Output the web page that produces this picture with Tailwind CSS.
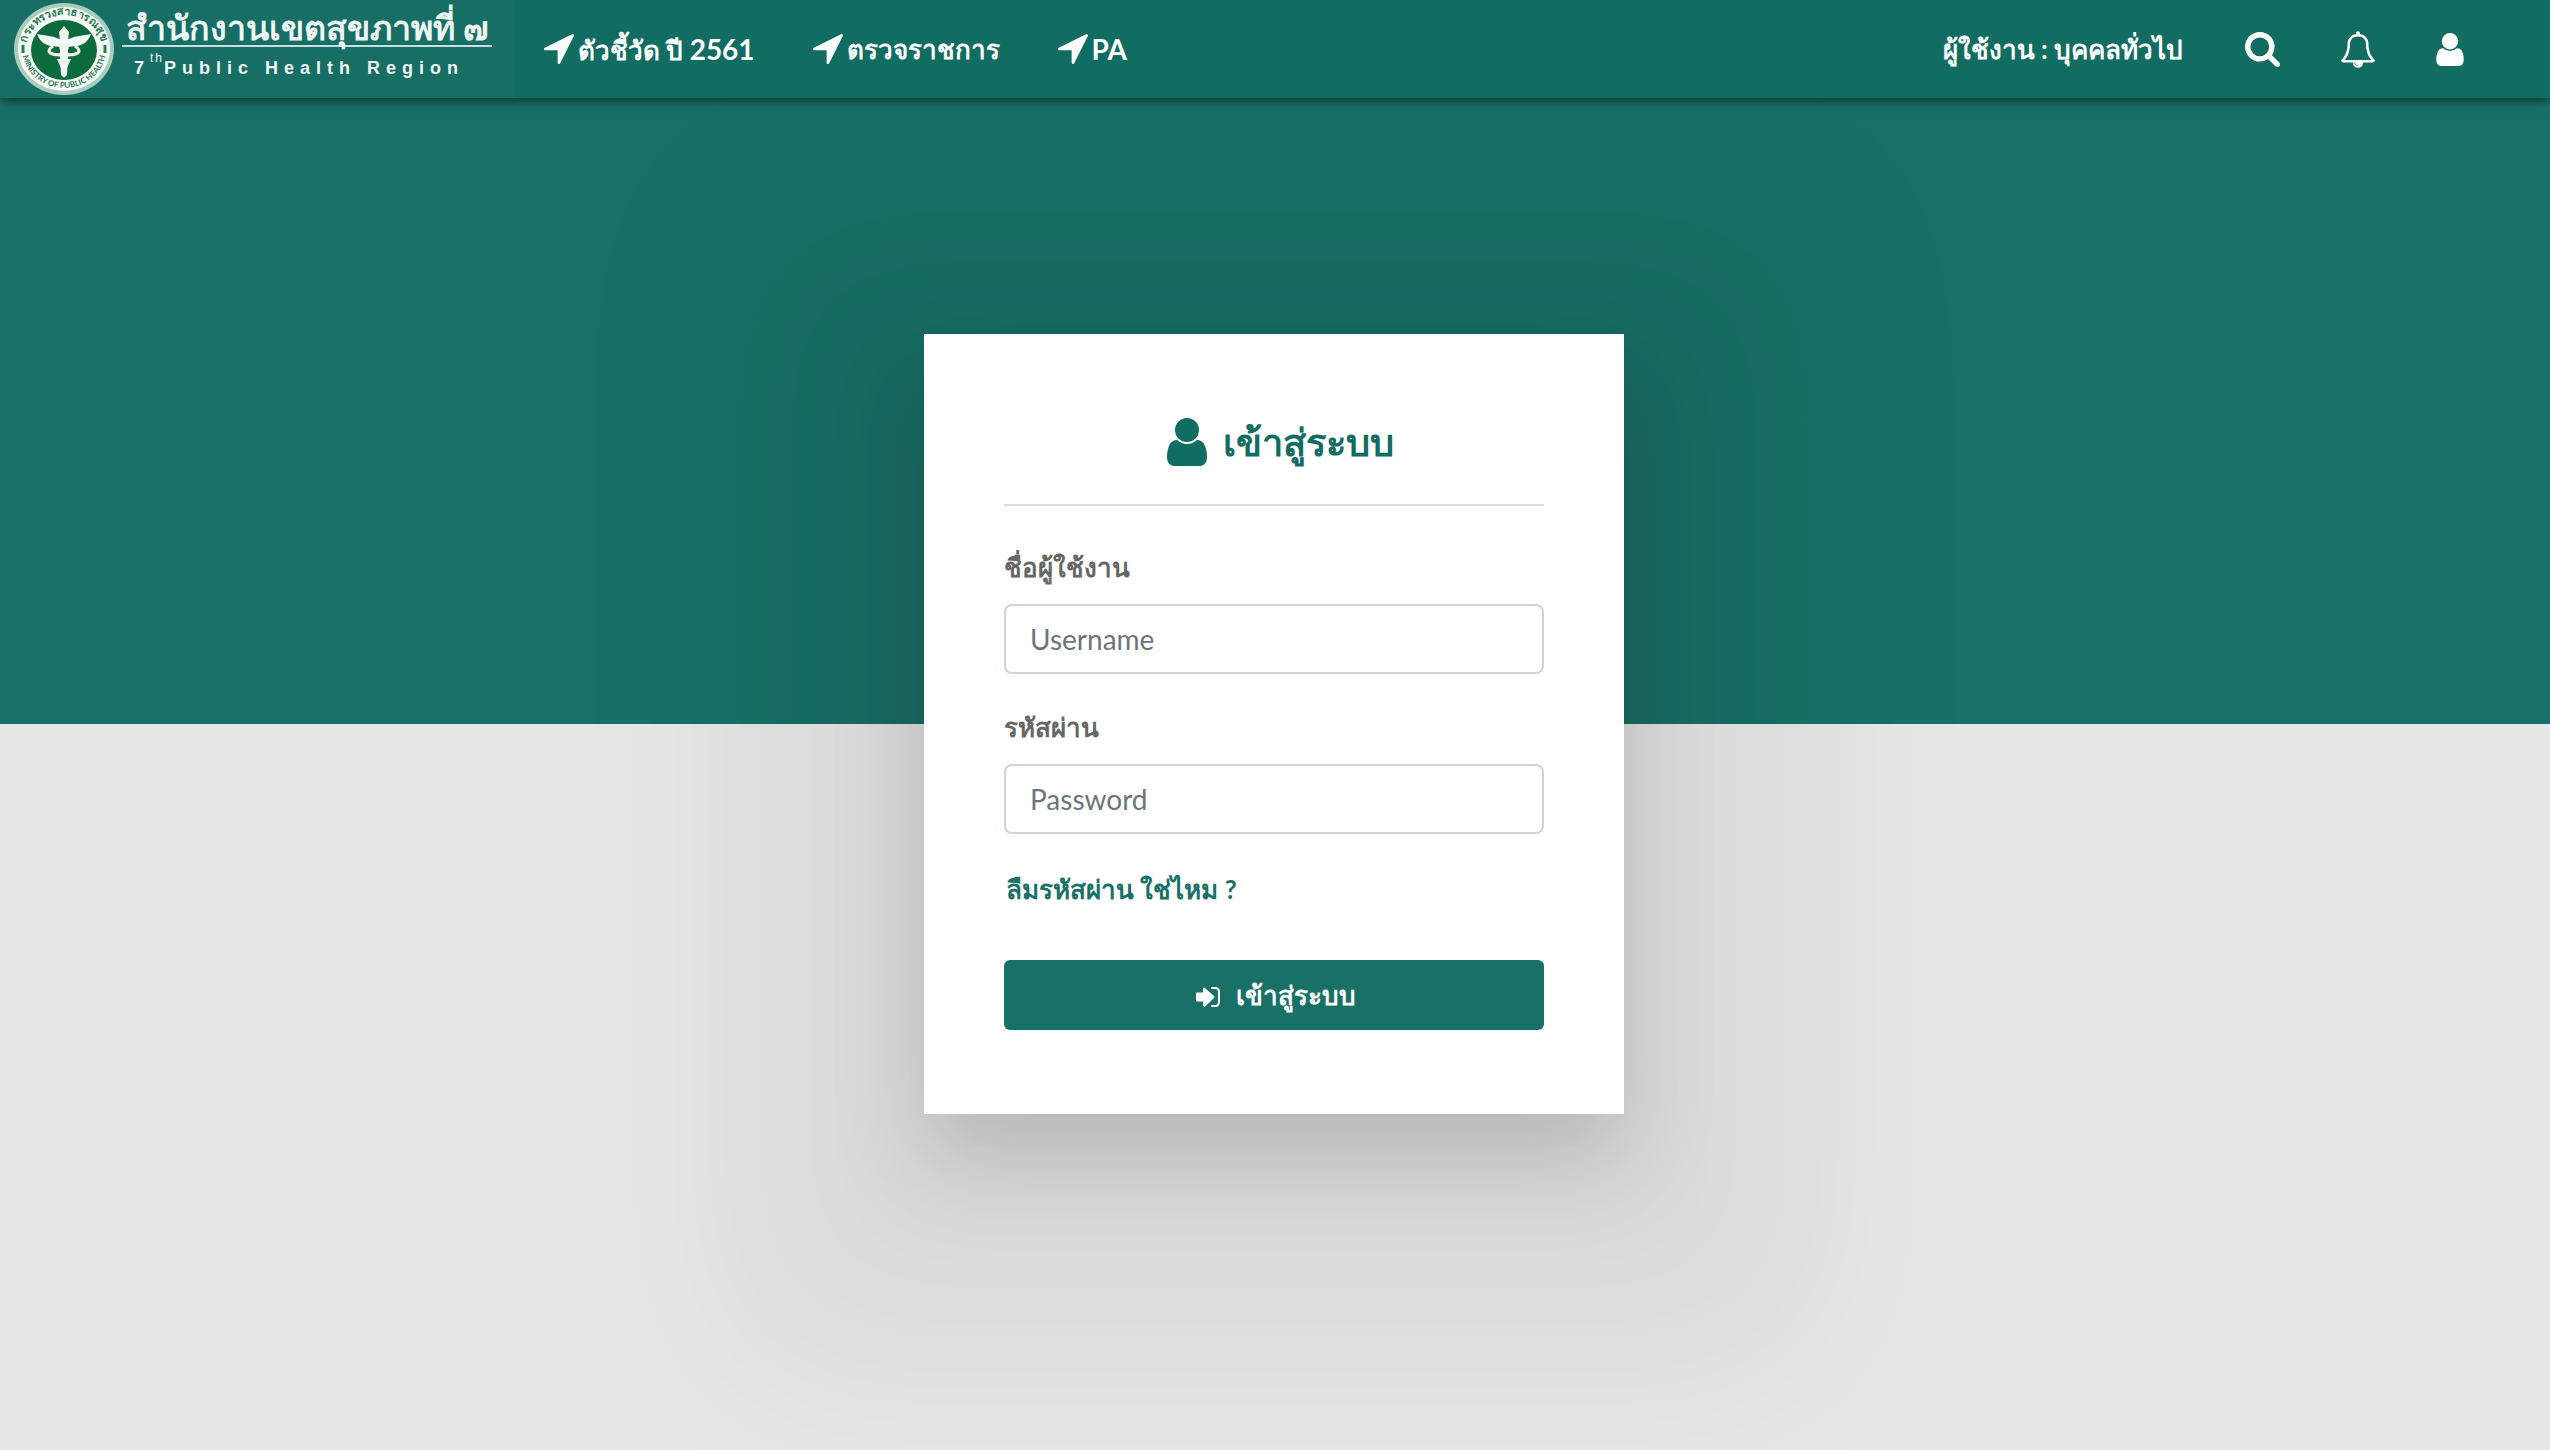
<!DOCTYPE html>
<html lang="th">
<head>
<meta charset="utf-8">
<meta name="viewport" content="width=device-width, initial-scale=1">
<title>สำนักงานเขตสุขภาพที่ ๗</title>
<script src="https://cdn.jsdelivr.net/npm/@tailwindcss/browser@4"></script>
</head>
<body class="min-h-screen bg-[#e7e7e7] font-['Lato',sans-serif] text-[26px] leading-[42px]">
<svg class="hidden" aria-hidden="true">
  <symbol id="user" viewBox="0 0 1280 1536"><path fill="currentColor" d="M1280 1271q0 109-62.500 187t-150.500 78h-854q-88 0-150.500-78t-62.500-187q0-85 8.500-160.500t31.500-152 58.500-131 94-89 134.500-34.500q131 128 313 128t313-128q76 0 134.500 34.500t94 89 58.500 131 31.500 152 8.500 160.500zm-256-887q0 159-112.500 271.500t-271.500 112.500-271.500-112.500-112.500-271.500 112.500-271.500 271.500-112.500 271.500 112.500 112.500 271.500z"/></symbol>
  <symbol id="arrow" viewBox="0 0 1408 1408"><path fill="currentColor" d="M1401 93l-640 1280q-17 35-57 35-5 0-15-2-22-5-35.500-22.500t-13.500-39.500v-576h-576q-22 0-39.500-13.500t-22.500-35.500 4-42 29-30l1280-640q13-7 29-7 27 0 45 19 15 14 18.500 34.500t-6.500 39.500z"/></symbol>
</svg>
<header class="relative z-10 flex h-[98px] items-center bg-[#116c62] text-white shadow-[0_2px_10px_rgba(0,0,0,0.6)]">
  <a href="#" class="flex h-full w-[514px] shrink-0 items-center bg-[#166e65] pl-[13px]">
    <svg class="h-[94px] w-[102px] shrink-0" viewBox="0 0 102 94" role="img" aria-label="Ministry of Public Health">
      <defs>
        <path id="top" d="M13 47a38 34 0 0 1 76 0"/>
        <path id="bottom" d="M9 47a42 39 0 0 0 84 0"/>
      </defs>
      <ellipse cx="51" cy="47" rx="50" ry="46" fill="#a9cdbb"/>
      <ellipse cx="51" cy="47" rx="46" ry="42" fill="#f5faf7"/>
      <ellipse cx="51" cy="48" rx="33" ry="30" fill="#0b6b3c"/>
      <text font-size="11" font-weight="700" fill="#2b7a52" font-family="Lato, sans-serif"><textPath href="#top" startOffset="50%" text-anchor="middle">กระทรวงสาธารณสุข</textPath></text>
      <text font-size="8" font-weight="700" fill="#2b7a52" font-family="Lato, sans-serif"><textPath href="#bottom" startOffset="50%" text-anchor="middle">MINISTRY OF PUBLIC HEALTH</textPath></text>
      <path d="M10 43v8M92 43v8" stroke="#2b7a52" stroke-width="3"/>
      <g fill="#f3f8f5">
        <path d="M51 24l5 6-1 8h-8l-1-8z"/>
        <path d="M48 38c-6-4-14-4-24-6 3 8 8 11 14 12l10 1zM54 38c6-4 14-4 24-6-3 8-8 11-14 12l-10 1z"/>
        <path d="M46 37h10l-2 36-3 3-3-3z"/>
        <path d="M44 57h14l-4 9h-6z"/>
      </g>
      <path d="M40 44c-8 6-4 9 11 9s19-3 11-9" fill="none" stroke="#f3f8f5" stroke-width="3"/>
      <path d="M42 49h5M55 49h5" stroke="#0b6b3c" stroke-width="3"/>
    </svg>
    <span class="ml-[7px] flex w-[370px] flex-col text-[#eef6f4]">
      <span class="border-b-2 border-[#c7dedb] pl-1 text-[34px] font-bold leading-[36px] whitespace-nowrap">สำนักงานเขตสุขภาพที่ ๗</span>
      <span class="pl-3 font-['Liberation_Sans',sans-serif] text-[18px] font-bold leading-[42px] tracking-[6px] whitespace-nowrap">7<sup class="-top-3 text-[12px] font-normal tracking-[2px]">th</sup>Public Health Region</span>
    </span>
  </a>
  <nav class="flex items-center gap-[58px] pl-[30px] font-bold whitespace-nowrap">
    <a href="#" class="flex items-center gap-1"><svg class="size-[30px]"><use href="#arrow"/></svg><span>ตัวชี้วัด ปี <span class="text-[28px]">2561</span></span></a>
    <a href="#" class="flex items-center gap-1"><svg class="size-[30px]"><use href="#arrow"/></svg>ตรวจราชการ</a>
    <a href="#" class="flex items-center gap-1"><svg class="size-[30px]"><use href="#arrow"/></svg><span class="text-[28px]">PA</span></a>
  </nav>
  <div class="ml-auto flex items-center pr-[86px] font-bold whitespace-nowrap">
    <span class="mr-[62px]">ผู้ใช้งาน : บุคคลทั่วไป</span>
    <button type="button" aria-label="ค้นหา" class="mr-[61px]"><svg class="size-[35px]" viewBox="0 0 1664 1664"><path fill="currentColor" d="M1152 704q0-185-131.500-316.500t-316.500-131.500-316.500 131.500-131.500 316.500 131.500 316.500 316.500 131.500 316.500-131.500 131.500-316.500zm512 832q0 52-38 90t-90 38q-54 0-90-38l-343-342q-179 124-399 124-143 0-273.500-55.500t-225-150-150-225-55.500-273.500 55.500-273.500 150-225 225-150 273.500-55.500 273.500 55.500 225 150 150 225 55.500 273.500q0 220-124 399l343 343q37 37 37 90z"/></svg></button>
    <button type="button" aria-label="การแจ้งเตือน" class="mr-[61px]"><svg class="h-[37px] w-[34px]" viewBox="0 0 1664 1792"><path fill="currentColor" d="M848 1696q0-16-16-16-59 0-101.500-42.500t-42.500-101.500q0-16-16-16t-16 16q0 73 51.500 124.500t124.500 51.500q16 0 16-16zm-666-288h1300q-266-300-266-832 0-51-24-105t-69-103-121.500-80.500-169.500-31.500-169.500 31.500-121.500 80.500-69 103-24 105q0 532-266 832zm1482 0q0 52-38 90t-90 38h-448q0 106-75 181t-181 75-181-75-75-181h-448q-52 0-90-38t-38-90q50-42 91-88t85-119.500 74.500-158.500 50-206 19.500-260q0-152 117-282.500t307-158.500q-8-19-8-39 0-40 28-68t68-28 68 28 28 68q0 20-8 39 190 28 307 158.500t117 282.500q0 139 19.500 260t50 206 74.500 158.500 85 119.500 91 88z"/></svg></button>
    <button type="button" aria-label="บัญชีผู้ใช้"><svg class="h-[33px] w-[28px]"><use href="#user"/></svg></button>
  </div>
</header>
<main>
  <div class="h-[626px] bg-[#187066]"></div>
  <div class="-mt-[390px] flex justify-center pr-[2px]">
  <form class="flex h-[780px] w-[700px] flex-col bg-white px-20 pt-20 text-[#666] shadow-[0_46px_90px_rgba(0,0,0,0.16),0_60px_180px_190px_rgba(0,0,0,0.06)]">
    <h1 class="flex h-[92px] items-start justify-center gap-4 border-b-2 border-[#dedede] pl-3 text-[38px] font-bold leading-[54px] text-[#116c62]">
      <svg class="mt-1 h-[48px] w-[40px]"><use href="#user"/></svg>เข้าสู่ระบบ
    </h1>
    <label for="username" class="mt-[40px] font-bold">ชื่อผู้ใช้งาน</label>
    <input id="username" type="text" placeholder="Username" class="mt-4 h-[70px] rounded-lg border-2 border-[#ced4da] px-6 text-[28px] placeholder:text-[#6c757d]">
    <label for="password" class="mt-[32px] font-bold">รหัสผ่าน</label>
    <input id="password" type="password" placeholder="Password" class="mt-4 h-[70px] rounded-lg border-2 border-[#ced4da] px-6 text-[28px] placeholder:text-[#6c757d]">
    <a href="#" class="mt-[34px] self-start pl-[2px] font-bold text-[#187066]">ลืมรหัสผ่าน ใช่ไหม ?</a>
    <button type="submit" class="mt-[50px] flex h-[70px] items-center justify-center gap-4 rounded-md bg-[#187066] pl-1 font-bold text-white">
      <svg class="mt-1 h-[20px] w-[24px]" viewBox="0 0 24 20"><path fill="currentColor" d="M0 6.500Q0 5.500 1 5.500H7V1.500Q7.500 0 9 1L18 9Q19 10 18 11L9 19.500Q7.500 20 7 18.500V14.500H1Q0 14.500 0 13.500Z"/><path d="M15 1h4q4 0 4 4v10q0 4-4 4h-4" fill="none" stroke="currentColor" stroke-width="2"/></svg>เข้าสู่ระบบ
    </button>
  </form>
  </div>
</main>
</body>
</html>
